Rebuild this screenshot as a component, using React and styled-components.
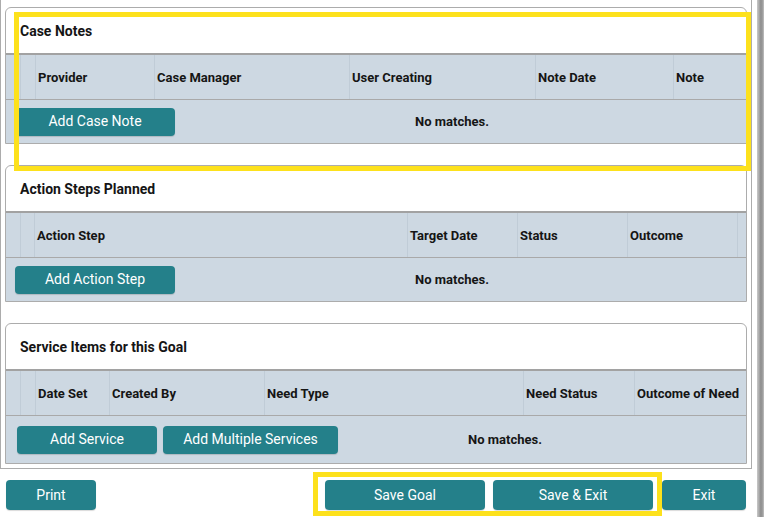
import React from "react";
import styled, { createGlobalStyle } from "styled-components";

const GlobalStyle = createGlobalStyle`
    html, body {
        margin: 0;
        padding: 0;
        background: #ffffff;
        font-family: Roboto, "Liberation Sans", Arial, sans-serif;
        color: #151515;
    }
`;

const Page = styled.div`
    position: relative;
    display: flex;
    width: 764px;
    height: 517px;
    overflow: hidden;
`;

const Main = styled.div`
    width: 754px;
    display: flex;
    flex-direction: column;
`;

const ScrollTrack = styled.div`
    margin-left: 3px;
    width: 7px;
    height: 100%;
    background: linear-gradient(to right, #c9c9c9 0%, #a9a9a9 30%, #8d8d8d 55%, #9f9f9f 80%, #c2c2c2 100%);
`;

const Frame = styled.div`
    width: 752px;
    box-sizing: border-box;
    border: 1px solid #acacac;
    border-top: none;
    padding: 7px 4px 4px 4px;
    display: flex;
    flex-direction: column;
    gap: 21px;
`;

const Panel = styled.section`
    border: 1px solid #acacac;
    border-radius: 6px 6px 0 0;
    background: #ffffff;
    overflow: hidden;
`;

const PanelTitle = styled.h3`
    margin: 0;
    height: 45px;
    display: flex;
    align-items: center;
    padding-left: 14px;
    font-size: 14px;
    font-weight: 700;
    color: #151515;
    border-bottom: 2px solid #a2a2a2;
`;

const HeaderRow = styled.div`
    display: grid;
    grid-template-columns: ${(p) => p.$cols};
    height: 44px;
    background: #cdd8e2;
    border-bottom: 1px solid #a9a9a9;
`;

const HeadCell = styled.div`
    display: flex;
    align-items: center;
    padding-left: 2px;
    font-size: 13px;
    font-weight: 700;
    color: #151515;
    white-space: nowrap;
    overflow: hidden;
    border-left: 1px solid #c0ccd7;

    &:first-child {
        border-left: none;
    }
`;

const BodyRow = styled.div`
    display: flex;
    align-items: center;
    height: ${(p) => p.$height}px;
    box-sizing: border-box;
    padding-left: ${(p) => p.$left}px;
    background: #cdd8e2;
    gap: 6px;
`;

const TealButton = styled.button`
    width: ${(p) => p.$width}px;
    height: ${(p) => p.$height || 28}px;
    border: none;
    border-radius: 4px;
    background: #24808a;
    color: #ffffff;
    font-family: Roboto, "Liberation Sans", Arial, sans-serif;
    font-size: 14px;
    line-height: 1;
    padding: 0 0 1px 0;
    cursor: pointer;
    box-shadow: 0 1px 1px rgba(0, 0, 0, 0.15);
`;

const Message = styled.div`
    flex: 1;
    text-align: center;
    padding-right: ${(p) => p.$shift}px;
    font-size: 13px;
    font-weight: 700;
    color: #151515;
`;

const Footer = styled.div`
    display: flex;
    align-items: center;
    padding: 11px 8px 0 6px;
`;

const Spacer = styled.div`
    flex: 1;
`;

const FooterGroup = styled.div`
    display: flex;
    gap: 8px;
    margin-right: 9px;
`;

const Highlight = styled.div`
    position: absolute;
    left: ${(p) => p.$x}px;
    top: ${(p) => p.$y}px;
    width: ${(p) => p.$w}px;
    height: ${(p) => p.$h}px;
    box-sizing: border-box;
    border: 5px solid #fde11c;
    pointer-events: none;
`;

const tables = [
    {
        title: "Case Notes",
        cols: "14px 15px 119px 195px 186px 138px 1fr",
        heads: ["", "", "Provider", "Case Manager", "User Creating", "Note Date", "Note"],
        buttons: [{ label: "Add Case Note", width: 160 }],
        height: 43,
        left: 9,
        shift: 23,
    },
    {
        title: "Action Steps Planned",
        cols: "14px 14px 373px 110px 110px 110px 1fr",
        heads: ["", "", "Action Step", "Target Date", "Status", "Outcome", ""],
        buttons: [{ label: "Add Action Step", width: 160 }],
        height: 43,
        left: 9,
        shift: 23,
    },
    {
        title: "Service Items for this Goal",
        cols: "14px 15px 74px 155px 259px 111px 1fr",
        heads: ["", "", "Date Set", "Created By", "Need Type", "Need Status", "Outcome of Need"],
        buttons: [
            { label: "Add Service", width: 140 },
            { label: "Add Multiple Services", width: 175 },
        ],
        height: 47,
        left: 11,
        shift: 80,
    },
];

const App = () => {
    return (
        <>
            <GlobalStyle />
            <Page>
                <Main>
                    <Frame>
                        {tables.map((t) => (
                            <Panel key={t.title}>
                                <PanelTitle>{t.title}</PanelTitle>
                                <HeaderRow $cols={t.cols}>
                                    {t.heads.map((h, i) => (
                                        <HeadCell key={i}>{h}</HeadCell>
                                    ))}
                                </HeaderRow>
                                <BodyRow $height={t.height} $left={t.left}>
                                    {t.buttons.map((b) => (
                                        <TealButton key={b.label} $width={b.width}>{b.label}</TealButton>
                                    ))}
                                    <Message $shift={t.shift}>No matches.</Message>
                                </BodyRow>
                            </Panel>
                        ))}
                    </Frame>
                    <Footer>
                        <TealButton $width={90} $height={30}>Print</TealButton>
                        <Spacer />
                        <FooterGroup>
                            <TealButton $width={160} $height={30}>Save Goal</TealButton>
                            <TealButton $width={160} $height={30}>Save &amp; Exit</TealButton>
                        </FooterGroup>
                        <TealButton $width={84} $height={30}>Exit</TealButton>
                    </Footer>
                </Main>
                <ScrollTrack />
                <Highlight $x={14} $y={12} $w={737} $h={159} />
                <Highlight $x={313} $y={472} $w={349} $h={44} />
            </Page>
        </>
    );
};

export default App;
